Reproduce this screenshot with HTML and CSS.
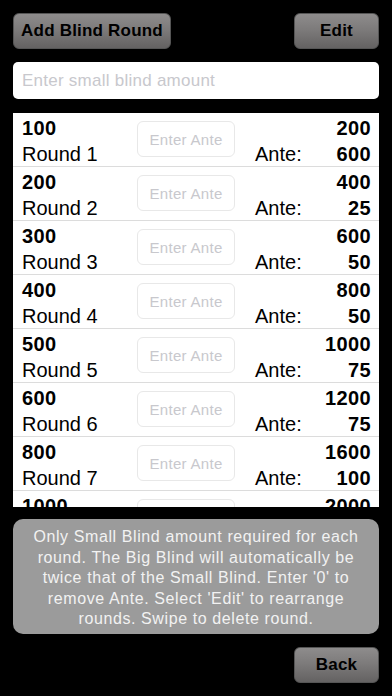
FILE: index.html
```html
<!DOCTYPE html>
<html lang="en">
<head>
  <meta charset="UTF-8" />
  <meta name="viewport" content="width=device-width, initial-scale=1.0"/>
  <title>Blind Rounds</title>
  <link rel="stylesheet" href="styles.css">
</head>
<body>

  <div class="topbar">
    <button class="button">Add Blind Round</button>
    <button class="button small">Edit</button>
  </div>

  <input class="blind-input" type="text" placeholder="Enter small blind amount">

  <div class="rounds">
    <div class="row">
      <div class="left"><b>100</b><span>Round 1</span></div>
      <input class="ante" type="text" placeholder="Enter Ante">
      <div class="ante-label">Ante:</div>
      <div class="right"><b>200</b><b>600</b></div>
    </div>
    <div class="row">
      <div class="left"><b>200</b><span>Round 2</span></div>
      <input class="ante" type="text" placeholder="Enter Ante">
      <div class="ante-label">Ante:</div>
      <div class="right"><b>400</b><b>25</b></div>
    </div>
    <div class="row">
      <div class="left"><b>300</b><span>Round 3</span></div>
      <input class="ante" type="text" placeholder="Enter Ante">
      <div class="ante-label">Ante:</div>
      <div class="right"><b>600</b><b>50</b></div>
    </div>
    <div class="row">
      <div class="left"><b>400</b><span>Round 4</span></div>
      <input class="ante" type="text" placeholder="Enter Ante">
      <div class="ante-label">Ante:</div>
      <div class="right"><b>800</b><b>50</b></div>
    </div>
    <div class="row">
      <div class="left"><b>500</b><span>Round 5</span></div>
      <input class="ante" type="text" placeholder="Enter Ante">
      <div class="ante-label">Ante:</div>
      <div class="right"><b>1000</b><b>75</b></div>
    </div>
    <div class="row">
      <div class="left"><b>600</b><span>Round 6</span></div>
      <input class="ante" type="text" placeholder="Enter Ante">
      <div class="ante-label">Ante:</div>
      <div class="right"><b>1200</b><b>75</b></div>
    </div>
    <div class="row">
      <div class="left"><b>800</b><span>Round 7</span></div>
      <input class="ante" type="text" placeholder="Enter Ante">
      <div class="ante-label">Ante:</div>
      <div class="right"><b>1600</b><b>100</b></div>
    </div>
    <div class="row">
      <div class="left"><b>1000</b><span>Round 8</span></div>
      <input class="ante" type="text" placeholder="Enter Ante">
      <div class="ante-label">Ante:</div>
      <div class="right"><b>2000</b><b>100</b></div>
    </div>
  </div>

  <div class="info">
    Only Small Blind amount required for each round. The Big Blind will automatically be twice that of the Small Blind. Enter '0' to remove Ante. Select 'Edit' to rearrange rounds. Swipe to delete round.
  </div>

  <div class="bottombar">
    <button class="button small">Back</button>
  </div>

</body>
</html>
```

FILE: styles.css
```css
body {
  margin: 0;
  background: #000;
  font-family: 'Liberation Sans', Arial, sans-serif;
  padding: 13px 13px 0 13px;
  width: 366px;
}

.topbar, .bottombar {
  display: flex;
  justify-content: space-between;
}

.bottombar {
  justify-content: flex-end;
  margin-top: 13px;
}

.button {
  height: 36px;
  padding: 0;
  width: 158px;
  white-space: nowrap;
  border: 1px solid #555;
  border-radius: 6px;
  background: linear-gradient(#8e8c8c, #7d7b7b 45%, #646262);
  color: #000;
  font-family: inherit;
  font-size: 17px;
  font-weight: bold;
  letter-spacing: 0.2px;
}

.button.small {
  width: 85px;
}

.blind-input {
  display: block;
  box-sizing: border-box;
  width: 366px;
  height: 37px;
  margin-top: 13px;
  border: none;
  border-radius: 5px;
  padding: 0 9px;
  font-family: inherit;
  font-size: 17px;
  letter-spacing: 0.25px;
  background: #fff;
}

input::placeholder {
  color: #c8c8cd;
}

.rounds {
  margin-top: 14px;
  height: 394px;
  background: #fff;
  overflow: hidden;
}

.row {
  display: flex;
  align-items: flex-start;
  box-sizing: border-box;
  height: 54px;
  padding: 2px 8px 0 9px;
  border-bottom: 1px solid #dcdcdc;
  font-size: 20px;
  line-height: 26px;
  color: #000;
}

.row b {
  letter-spacing: 0.4px;
}

.left {
  width: 115px;
  display: flex;
  flex-direction: column;
}

.ante {
  box-sizing: border-box;
  width: 98px;
  height: 36px;
  margin-top: 6px;
  border: 1px solid #e8e8e8;
  border-radius: 6px;
  text-align: center;
  font-family: inherit;
  font-size: 15px;
  letter-spacing: 0.3px;
  padding: 0;
}

.ante-label {
  margin-left: 20px;
  margin-top: 26px;
}

.right {
  flex: 1;
  display: flex;
  flex-direction: column;
  align-items: flex-end;
}

.info {
  margin-top: 12px;
  background: #9b9b9b;
  border-radius: 10px;
  padding: 8px 10px 4px;
  color: #f2f2f2;
  text-align: center;
  font-size: 16px;
  line-height: 20.5px;
  letter-spacing: 0.6px;
}
```
